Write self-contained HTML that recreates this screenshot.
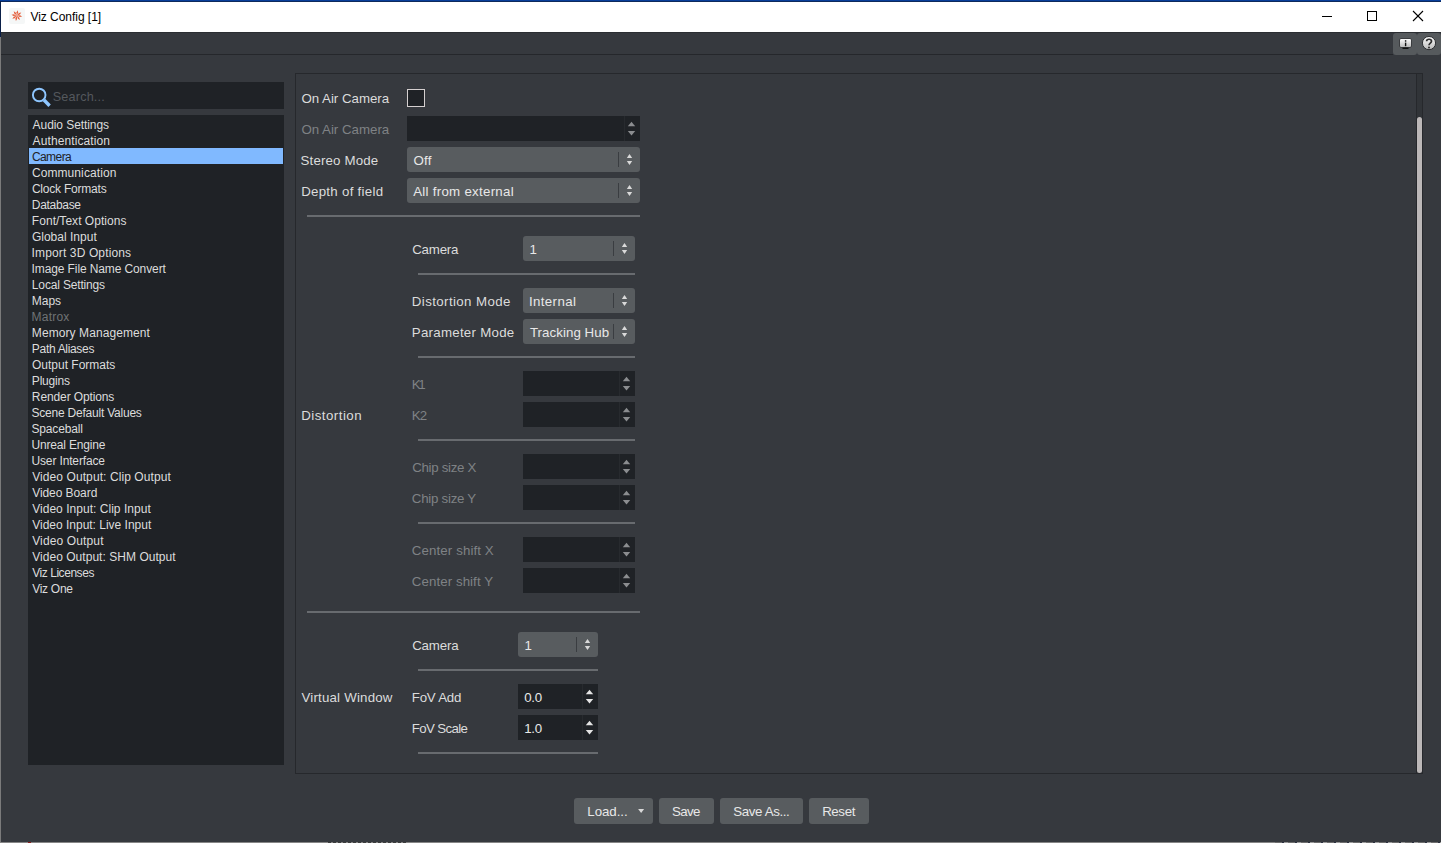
<!DOCTYPE html>
<html><head><meta charset="utf-8"><title>Viz Config [1]</title>
<style>
html,body{margin:0;padding:0;width:1441px;height:843px;overflow:hidden;background:#36393e;font-family:"Liberation Sans",sans-serif}
.r{position:absolute}
.t{position:absolute;white-space:pre;line-height:20px;height:20px}
svg{position:absolute;left:0;top:0}
</style></head><body>
<div class="r" style="left:0px;top:0px;width:1441px;height:1px;background:#083f9b;"></div>
<div class="r" style="left:0px;top:1px;width:1441px;height:1px;background:#0e2a5c;"></div>
<div class="r" style="left:0px;top:1px;width:1px;height:36px;background:#0a1f48;"></div>
<div class="r" style="left:0px;top:37px;width:1px;height:806px;background:#7b7b7b;"></div>
<div class="r" style="left:1px;top:2px;width:1440px;height:30px;background:#ffffff;"></div>
<div class="r" style="left:9px;top:8px;width:16px;height:16px;background:#f5f7f7;border-radius:2px"></div>
<span id="title" class="t" style="left:30.42px;top:6.84px;font-size:12px;color:#000000;letter-spacing:-0.035px">Viz Config [1]</span>
<div class="r" style="left:1px;top:32px;width:1440px;height:1px;background:#2b2e32;"></div>
<div class="r" style="left:1px;top:54px;width:1392px;height:1px;background:#25272b;"></div>
<div class="r" style="left:1393px;top:33px;width:24px;height:22px;background:#565a5d;border-radius:3px"></div>
<div class="r" style="left:1417px;top:33px;width:24px;height:22px;background:#565a5d;border-radius:3px"></div>
<div class="r" style="left:0px;top:842px;width:1441px;height:1px;background:#868686;"></div>
<div class="r" style="left:28px;top:842px;width:3px;height:1px;background:#8a1c1c;"></div>
<div class="r" style="left:328px;top:842px;width:80px;height:1px;background:repeating-linear-gradient(90deg,#3c3c3c 0 3px,#868686 3px 5px);"></div>
<div class="r" style="left:1275px;top:842px;width:166px;height:1px;background:repeating-linear-gradient(90deg,#6e6e6e 0 7px,#2c3140 7px 9px,#9a9a9a 9px 13px);"></div>
<div class="r" style="left:28px;top:82px;width:256px;height:27px;background:#1f2226;"></div>
<span id="search" class="t" style="left:52.66px;top:87.33px;font-size:12.6px;color:#54585d;letter-spacing:0.218px">Search...</span>
<div class="r" style="left:28px;top:115px;width:256px;height:650px;background:#1f2226;"></div>
<span id="li0" class="t" style="left:32.62px;top:114.94px;font-size:12px;color:#dcdcdc;letter-spacing:-0.071px">Audio Settings</span>
<span id="li1" class="t" style="left:32.62px;top:130.94px;font-size:12px;color:#dcdcdc;letter-spacing:0.096px">Authentication</span>
<div class="r" style="left:29px;top:148px;width:254px;height:16px;background:#80b9ff;"></div>
<span id="li2" class="t" style="left:31.93px;top:146.94px;font-size:12px;color:#1f2226;letter-spacing:-0.572px">Camera</span>
<span id="li3" class="t" style="left:31.93px;top:162.94px;font-size:12px;color:#dcdcdc;letter-spacing:0.087px">Communication</span>
<span id="li4" class="t" style="left:31.93px;top:178.94px;font-size:12px;color:#dcdcdc;letter-spacing:-0.214px">Clock Formats</span>
<span id="li5" class="t" style="left:31.86px;top:194.94px;font-size:12px;color:#dcdcdc;letter-spacing:-0.313px">Database</span>
<span id="li6" class="t" style="left:31.86px;top:210.94px;font-size:12px;color:#dcdcdc;letter-spacing:0.031px">Font/Text Options</span>
<span id="li7" class="t" style="left:31.90px;top:226.94px;font-size:12px;color:#dcdcdc;letter-spacing:0.016px">Global Input</span>
<span id="li8" class="t" style="left:31.60px;top:242.94px;font-size:12px;color:#dcdcdc;letter-spacing:0.130px">Import 3D Options</span>
<span id="li9" class="t" style="left:31.60px;top:258.94px;font-size:12px;color:#dcdcdc;letter-spacing:-0.112px">Image File Name Convert</span>
<span id="li10" class="t" style="left:31.86px;top:274.94px;font-size:12px;color:#dcdcdc;letter-spacing:-0.166px">Local Settings</span>
<span id="li11" class="t" style="left:31.86px;top:290.94px;font-size:12px;color:#dcdcdc;letter-spacing:-0.028px">Maps</span>
<span id="li12" class="t" style="left:31.56px;top:306.94px;font-size:12px;color:#6f7275;letter-spacing:0.217px">Matrox</span>
<span id="li13" class="t" style="left:31.86px;top:322.94px;font-size:12px;color:#dcdcdc;letter-spacing:0.080px">Memory Management</span>
<span id="li14" class="t" style="left:31.86px;top:338.94px;font-size:12px;color:#dcdcdc;letter-spacing:-0.317px">Path Aliases</span>
<span id="li15" class="t" style="left:31.96px;top:354.94px;font-size:12px;color:#dcdcdc;letter-spacing:0.002px">Output Formats</span>
<span id="li16" class="t" style="left:31.86px;top:370.94px;font-size:12px;color:#dcdcdc;letter-spacing:-0.215px">Plugins</span>
<span id="li17" class="t" style="left:31.86px;top:386.94px;font-size:12px;color:#dcdcdc;letter-spacing:-0.118px">Render Options</span>
<span id="li18" class="t" style="left:31.45px;top:402.94px;font-size:12px;color:#dcdcdc;letter-spacing:-0.215px">Scene Default Values</span>
<span id="li19" class="t" style="left:31.45px;top:418.94px;font-size:12px;color:#dcdcdc;letter-spacing:-0.158px">Spaceball</span>
<span id="li20" class="t" style="left:31.48px;top:434.94px;font-size:12px;color:#dcdcdc;letter-spacing:-0.171px">Unreal Engine</span>
<span id="li21" class="t" style="left:31.48px;top:450.94px;font-size:12px;color:#dcdcdc;letter-spacing:-0.139px">User Interface</span>
<span id="li22" class="t" style="left:32.21px;top:466.94px;font-size:12px;color:#dcdcdc;letter-spacing:0.085px">Video Output: Clip Output</span>
<span id="li23" class="t" style="left:32.21px;top:482.94px;font-size:12px;color:#dcdcdc;letter-spacing:-0.071px">Video Board</span>
<span id="li24" class="t" style="left:32.21px;top:498.94px;font-size:12px;color:#dcdcdc;letter-spacing:0.030px">Video Input: Clip Input</span>
<span id="li25" class="t" style="left:32.21px;top:514.94px;font-size:12px;color:#dcdcdc;letter-spacing:-0.007px">Video Input: Live Input</span>
<span id="li26" class="t" style="left:32.21px;top:530.94px;font-size:12px;color:#dcdcdc;letter-spacing:0.131px">Video Output</span>
<span id="li27" class="t" style="left:32.21px;top:546.94px;font-size:12px;color:#dcdcdc;letter-spacing:0.038px">Video Output: SHM Output</span>
<span id="li28" class="t" style="left:32.21px;top:562.94px;font-size:12px;color:#dcdcdc;letter-spacing:-0.451px">Viz Licenses</span>
<span id="li29" class="t" style="left:32.21px;top:578.94px;font-size:12px;color:#dcdcdc;letter-spacing:-0.279px">Viz One</span>
<div class="r" style="left:295px;top:73px;width:1128px;height:701px;border:1px solid #26282c;box-sizing:border-box"></div>
<div class="r" style="left:1416px;top:74px;width:1px;height:699px;background:#26282c;"></div>
<div class="r" style="left:1417px;top:74px;width:5px;height:699px;background:#313438;"></div>
<div class="r" style="left:1417px;top:117px;width:5px;height:656px;background:#bcb8b8;border-radius:2.5px"></div>
<span id="l1" class="t" style="left:301.39px;top:89.39px;font-size:13.3px;color:#dcdcdc;letter-spacing:-0.015px">On Air Camera</span>
<div class="r" style="left:407px;top:89px;width:18px;height:18px;background:#1f2226;border:1px solid #d5d0d0;box-sizing:border-box"></div>
<span id="l2" class="t" style="left:301.38px;top:120.19px;font-size:13.3px;color:#7f8285;letter-spacing:-0.005px">On Air Camera</span>
<div class="r" style="left:407px;top:116px;width:233px;height:25px;background:#1f2226;"></div>
<div class="r" style="left:624px;top:116px;width:1px;height:25px;background:#272a2e;"></div>
<span id="l3" class="t" style="left:300.55px;top:150.89px;font-size:13.3px;color:#dcdcdc;letter-spacing:0.152px">Stereo Mode</span>
<div class="r" style="left:407px;top:147px;width:233px;height:25px;background:#585c5f;border-radius:3px"></div>
<div class="r" style="left:618px;top:152px;width:1px;height:15px;background:#3a3d41;"></div>
<span id="c3" class="t" style="left:413.40px;top:150.89px;font-size:13.3px;color:#e8e8e8;letter-spacing:0.310px">Off</span>
<span id="l4" class="t" style="left:301.15px;top:182.09px;font-size:13.3px;color:#dcdcdc;letter-spacing:0.278px">Depth of field</span>
<div class="r" style="left:407px;top:178px;width:233px;height:25px;background:#585c5f;border-radius:3px"></div>
<div class="r" style="left:618px;top:183px;width:1px;height:15px;background:#3a3d41;"></div>
<span id="c4" class="t" style="left:413.21px;top:182.09px;font-size:13.3px;color:#e8e8e8;letter-spacing:0.275px">All from external</span>
<div class="r" style="left:307px;top:215px;width:333px;height:2px;background:#686b6f;"></div>
<span id="d_cam" class="t" style="left:412.18px;top:240.19px;font-size:13.3px;color:#dcdcdc;letter-spacing:-0.197px">Camera</span>
<div class="r" style="left:523px;top:236px;width:112px;height:25px;background:#585c5f;border-radius:3px"></div>
<div class="r" style="left:613px;top:241px;width:1px;height:15px;background:#3a3d41;"></div>
<span id="d_cam_v" class="t" style="left:529.50px;top:240.19px;font-size:13.3px;color:#e8e8e8;letter-spacing:0.000px">1</span>
<div class="r" style="left:418px;top:273px;width:217px;height:2px;background:#686b6f;"></div>
<span id="d_dm" class="t" style="left:411.82px;top:291.79px;font-size:13.3px;color:#dcdcdc;letter-spacing:0.393px">Distortion Mode</span>
<div class="r" style="left:523px;top:288px;width:112px;height:25px;background:#585c5f;border-radius:3px"></div>
<div class="r" style="left:613px;top:293px;width:1px;height:15px;background:#3a3d41;"></div>
<span id="d_dm_v" class="t" style="left:529.03px;top:291.79px;font-size:13.3px;color:#e8e8e8;letter-spacing:0.352px">Internal</span>
<span id="d_pm" class="t" style="left:411.82px;top:322.89px;font-size:13.3px;color:#dcdcdc;letter-spacing:0.258px">Parameter Mode</span>
<div class="r" style="left:523px;top:319px;width:112px;height:25px;background:#585c5f;border-radius:3px"></div>
<div class="r" style="left:613px;top:324px;width:1px;height:15px;background:#3a3d41;"></div>
<span id="d_pm_v" class="t" style="left:529.95px;top:322.89px;font-size:13.3px;color:#e8e8e8;letter-spacing:0.052px">Tracking Hub</span>
<div class="r" style="left:418px;top:356px;width:217px;height:2px;background:#686b6f;"></div>
<span id="k1" class="t" style="left:411.81px;top:375.19px;font-size:13.3px;color:#7f8285;letter-spacing:-2.425px">K1</span>
<div class="r" style="left:523px;top:371px;width:112px;height:25px;background:#1f2226;"></div>
<div class="r" style="left:619px;top:371px;width:1px;height:25px;background:#272a2e;"></div>
<span id="k2" class="t" style="left:411.81px;top:406.29px;font-size:13.3px;color:#7f8285;letter-spacing:-0.858px">K2</span>
<div class="r" style="left:523px;top:402px;width:112px;height:25px;background:#1f2226;"></div>
<div class="r" style="left:619px;top:402px;width:1px;height:25px;background:#272a2e;"></div>
<span id="dist" class="t" style="left:301.15px;top:406.39px;font-size:13.3px;color:#dcdcdc;letter-spacing:0.476px">Distortion</span>
<div class="r" style="left:418px;top:439px;width:217px;height:2px;background:#686b6f;"></div>
<span id="csx" class="t" style="left:412.20px;top:457.89px;font-size:13.3px;color:#7f8285;letter-spacing:-0.296px">Chip size X</span>
<div class="r" style="left:523px;top:454px;width:112px;height:25px;background:#1f2226;"></div>
<div class="r" style="left:619px;top:454px;width:1px;height:25px;background:#272a2e;"></div>
<span id="csy" class="t" style="left:411.81px;top:489.09px;font-size:13.3px;color:#7f8285;letter-spacing:-0.258px">Chip size Y</span>
<div class="r" style="left:523px;top:485px;width:112px;height:25px;background:#1f2226;"></div>
<div class="r" style="left:619px;top:485px;width:1px;height:25px;background:#272a2e;"></div>
<div class="r" style="left:418px;top:522px;width:217px;height:2px;background:#686b6f;"></div>
<span id="cx" class="t" style="left:411.81px;top:540.99px;font-size:13.3px;color:#7f8285;letter-spacing:0.104px">Center shift X</span>
<div class="r" style="left:523px;top:537px;width:112px;height:25px;background:#1f2226;"></div>
<div class="r" style="left:619px;top:537px;width:1px;height:25px;background:#272a2e;"></div>
<span id="cy" class="t" style="left:411.81px;top:571.99px;font-size:13.3px;color:#7f8285;letter-spacing:0.072px">Center shift Y</span>
<div class="r" style="left:523px;top:568px;width:112px;height:25px;background:#1f2226;"></div>
<div class="r" style="left:619px;top:568px;width:1px;height:25px;background:#272a2e;"></div>
<div class="r" style="left:307px;top:611px;width:333px;height:2px;background:#686b6f;"></div>
<span id="v_cam" class="t" style="left:412.18px;top:635.99px;font-size:13.3px;color:#dcdcdc;letter-spacing:-0.184px">Camera</span>
<div class="r" style="left:518px;top:632px;width:80px;height:25px;background:#585c5f;border-radius:3px"></div>
<div class="r" style="left:576px;top:637px;width:1px;height:15px;background:#3a3d41;"></div>
<span id="v_cam_v" class="t" style="left:524.59px;top:635.99px;font-size:13.3px;color:#e8e8e8;letter-spacing:0.000px">1</span>
<div class="r" style="left:418px;top:669px;width:180px;height:2px;background:#686b6f;"></div>
<span id="vw" class="t" style="left:301.45px;top:688.09px;font-size:13.3px;color:#dcdcdc;letter-spacing:0.195px">Virtual Window</span>
<span id="fa" class="t" style="left:411.82px;top:688.09px;font-size:13.3px;color:#dcdcdc;letter-spacing:-0.251px">FoV Add</span>
<div class="r" style="left:518px;top:684px;width:80px;height:25px;background:#1f2226;"></div>
<div class="r" style="left:582px;top:684px;width:1px;height:25px;background:#272a2e;"></div>
<span id="fa_v" class="t" style="left:524.16px;top:688.09px;font-size:13.3px;color:#e8e8e8;letter-spacing:-0.262px">0.0</span>
<span id="fs" class="t" style="left:411.82px;top:718.89px;font-size:13.3px;color:#dcdcdc;letter-spacing:-0.654px">FoV Scale</span>
<div class="r" style="left:518px;top:715px;width:80px;height:25px;background:#1f2226;"></div>
<div class="r" style="left:582px;top:715px;width:1px;height:25px;background:#272a2e;"></div>
<span id="fs_v" class="t" style="left:524.27px;top:718.89px;font-size:13.3px;color:#e8e8e8;letter-spacing:-0.303px">1.0</span>
<div class="r" style="left:418px;top:752px;width:180px;height:2px;background:#686b6f;"></div>
<div class="r" style="left:574px;top:798px;width:79px;height:26px;background:#585c5f;border-radius:3px"></div>
<div class="r" style="left:659px;top:798px;width:55px;height:26px;background:#585c5f;border-radius:3px"></div>
<div class="r" style="left:720px;top:798px;width:83px;height:26px;background:#585c5f;border-radius:3px"></div>
<div class="r" style="left:809px;top:798px;width:60px;height:26px;background:#585c5f;border-radius:3px"></div>
<span id="b1" class="t" style="left:587.31px;top:802.29px;font-size:13.3px;color:#e8e8e8;letter-spacing:-0.062px">Load...</span>
<span id="b2" class="t" style="left:672.10px;top:802.29px;font-size:13.3px;color:#e8e8e8;letter-spacing:-0.706px">Save</span>
<span id="b3" class="t" style="left:733.33px;top:802.29px;font-size:13.3px;color:#e8e8e8;letter-spacing:-0.384px">Save As...</span>
<span id="b4" class="t" style="left:822.15px;top:802.29px;font-size:13.3px;color:#e8e8e8;letter-spacing:-0.385px">Reset</span>
<svg width="1441" height="843" viewBox="0 0 1441 843"><polygon points="627.8,126.3 635.2,126.3 631.5,121.8" fill="#8b8d90"/><polygon points="627.8,131 635.2,131 631.5,135.4" fill="#8b8d90"/><polygon points="626.8,158 632.2,158 629.5,153.9" fill="#d9d9d9"/><polygon points="626.8,161 632.2,161 629.5,165" fill="#d9d9d9"/><polygon points="626.8,189 632.2,189 629.5,184.9" fill="#d9d9d9"/><polygon points="626.8,192 632.2,192 629.5,196" fill="#d9d9d9"/><polygon points="621.8,247 627.2,247 624.5,242.9" fill="#d9d9d9"/><polygon points="621.8,250 627.2,250 624.5,254" fill="#d9d9d9"/><polygon points="621.8,299 627.2,299 624.5,294.9" fill="#d9d9d9"/><polygon points="621.8,302 627.2,302 624.5,306" fill="#d9d9d9"/><polygon points="621.8,330 627.2,330 624.5,325.9" fill="#d9d9d9"/><polygon points="621.8,333 627.2,333 624.5,337" fill="#d9d9d9"/><polygon points="622.8,381.3 630.2,381.3 626.5,376.8" fill="#8b8d90"/><polygon points="622.8,386 630.2,386 626.5,390.4" fill="#8b8d90"/><polygon points="622.8,412.3 630.2,412.3 626.5,407.8" fill="#8b8d90"/><polygon points="622.8,417 630.2,417 626.5,421.4" fill="#8b8d90"/><polygon points="622.8,464.3 630.2,464.3 626.5,459.8" fill="#8b8d90"/><polygon points="622.8,469 630.2,469 626.5,473.4" fill="#8b8d90"/><polygon points="622.8,495.3 630.2,495.3 626.5,490.8" fill="#8b8d90"/><polygon points="622.8,500 630.2,500 626.5,504.4" fill="#8b8d90"/><polygon points="622.8,547.3 630.2,547.3 626.5,542.8" fill="#8b8d90"/><polygon points="622.8,552 630.2,552 626.5,556.4" fill="#8b8d90"/><polygon points="622.8,578.3 630.2,578.3 626.5,573.8" fill="#8b8d90"/><polygon points="622.8,583 630.2,583 626.5,587.4" fill="#8b8d90"/><polygon points="584.8,643 590.2,643 587.5,638.9" fill="#d9d9d9"/><polygon points="584.8,646 590.2,646 587.5,650" fill="#d9d9d9"/><polygon points="585.8,694.3 593.2,694.3 589.5,689.8" fill="#e4e4e4"/><polygon points="585.8,699 593.2,699 589.5,703.4" fill="#e4e4e4"/><polygon points="585.8,725.3 593.2,725.3 589.5,720.8" fill="#e4e4e4"/><polygon points="585.8,730 593.2,730 589.5,734.4" fill="#e4e4e4"/><polygon points="638.1,809 644.1,809 641.1,813" fill="#d9d9d9"/><g stroke="#000" stroke-width="1" fill="none" shape-rendering="crispEdges">
<line x1="1322" y1="16.5" x2="1332" y2="16.5"/>
<rect x="1367.5" y="11.5" width="9" height="9"/></g>
<g stroke="#000" stroke-width="1.1" fill="none"><line x1="1413" y1="11" x2="1423" y2="21"/><line x1="1423" y1="11" x2="1413" y2="21"/></g><circle cx="39.2" cy="95" r="6.3" fill="none" stroke="#8ec6ff" stroke-width="1.9"/><line x1="44" y1="100" x2="49.6" y2="105.8" stroke="#8ec6ff" stroke-width="3.4"/><g fill="#e5613f"><polygon points="16.8,15.6 15.95,12.4 16.8,10.2 17.65,12.4" transform="rotate(10 16.8 15.6)"/><polygon points="16.8,15.6 15.95,12.4 16.8,10.2 17.65,12.4" transform="rotate(55 16.8 15.6)"/><polygon points="16.8,15.6 15.95,12.4 16.8,10.2 17.65,12.4" transform="rotate(100 16.8 15.6)"/><polygon points="16.8,15.6 15.95,12.4 16.8,10.2 17.65,12.4" transform="rotate(145 16.8 15.6)"/><polygon points="16.8,15.6 15.95,12.4 16.8,10.2 17.65,12.4" transform="rotate(190 16.8 15.6)"/><polygon points="16.8,15.6 15.95,12.4 16.8,10.2 17.65,12.4" transform="rotate(235 16.8 15.6)"/><polygon points="16.8,15.6 15.95,12.4 16.8,10.2 17.65,12.4" transform="rotate(280 16.8 15.6)"/><polygon points="16.8,15.6 15.95,12.4 16.8,10.2 17.65,12.4" transform="rotate(325 16.8 15.6)"/></g><defs><linearGradient id="g1" x1="0" y1="0" x2="0" y2="1"><stop offset="0" stop-color="#ffffff"/><stop offset="1" stop-color="#b8b8b8"/></linearGradient></defs>
<rect x="1399.5" y="38.5" width="12" height="9" rx="1.5" fill="url(#g1)" stroke="#3a3c3f" stroke-width="1"/>
<rect x="1402.5" y="47.6" width="6" height="1.4" fill="#111"/>
<rect x="1404.9" y="40.2" width="1.4" height="1.5" fill="#111"/><rect x="1404.9" y="42.6" width="1.4" height="3.6" fill="#111"/>
<circle cx="1429" cy="43.1" r="6.6" fill="url(#g1)" stroke="#2c2e31" stroke-width="1"/>
<path d="M1426.6,41.2 C1426.6,38.6 1431.5,38.6 1431.5,41.2 C1431.5,43 1429,43.2 1429,45.3" fill="none" stroke="#2e2e2e" stroke-width="1.7"/><circle cx="1429" cy="47.4" r="1" fill="#2e2e2e"/></svg>
</body></html>
